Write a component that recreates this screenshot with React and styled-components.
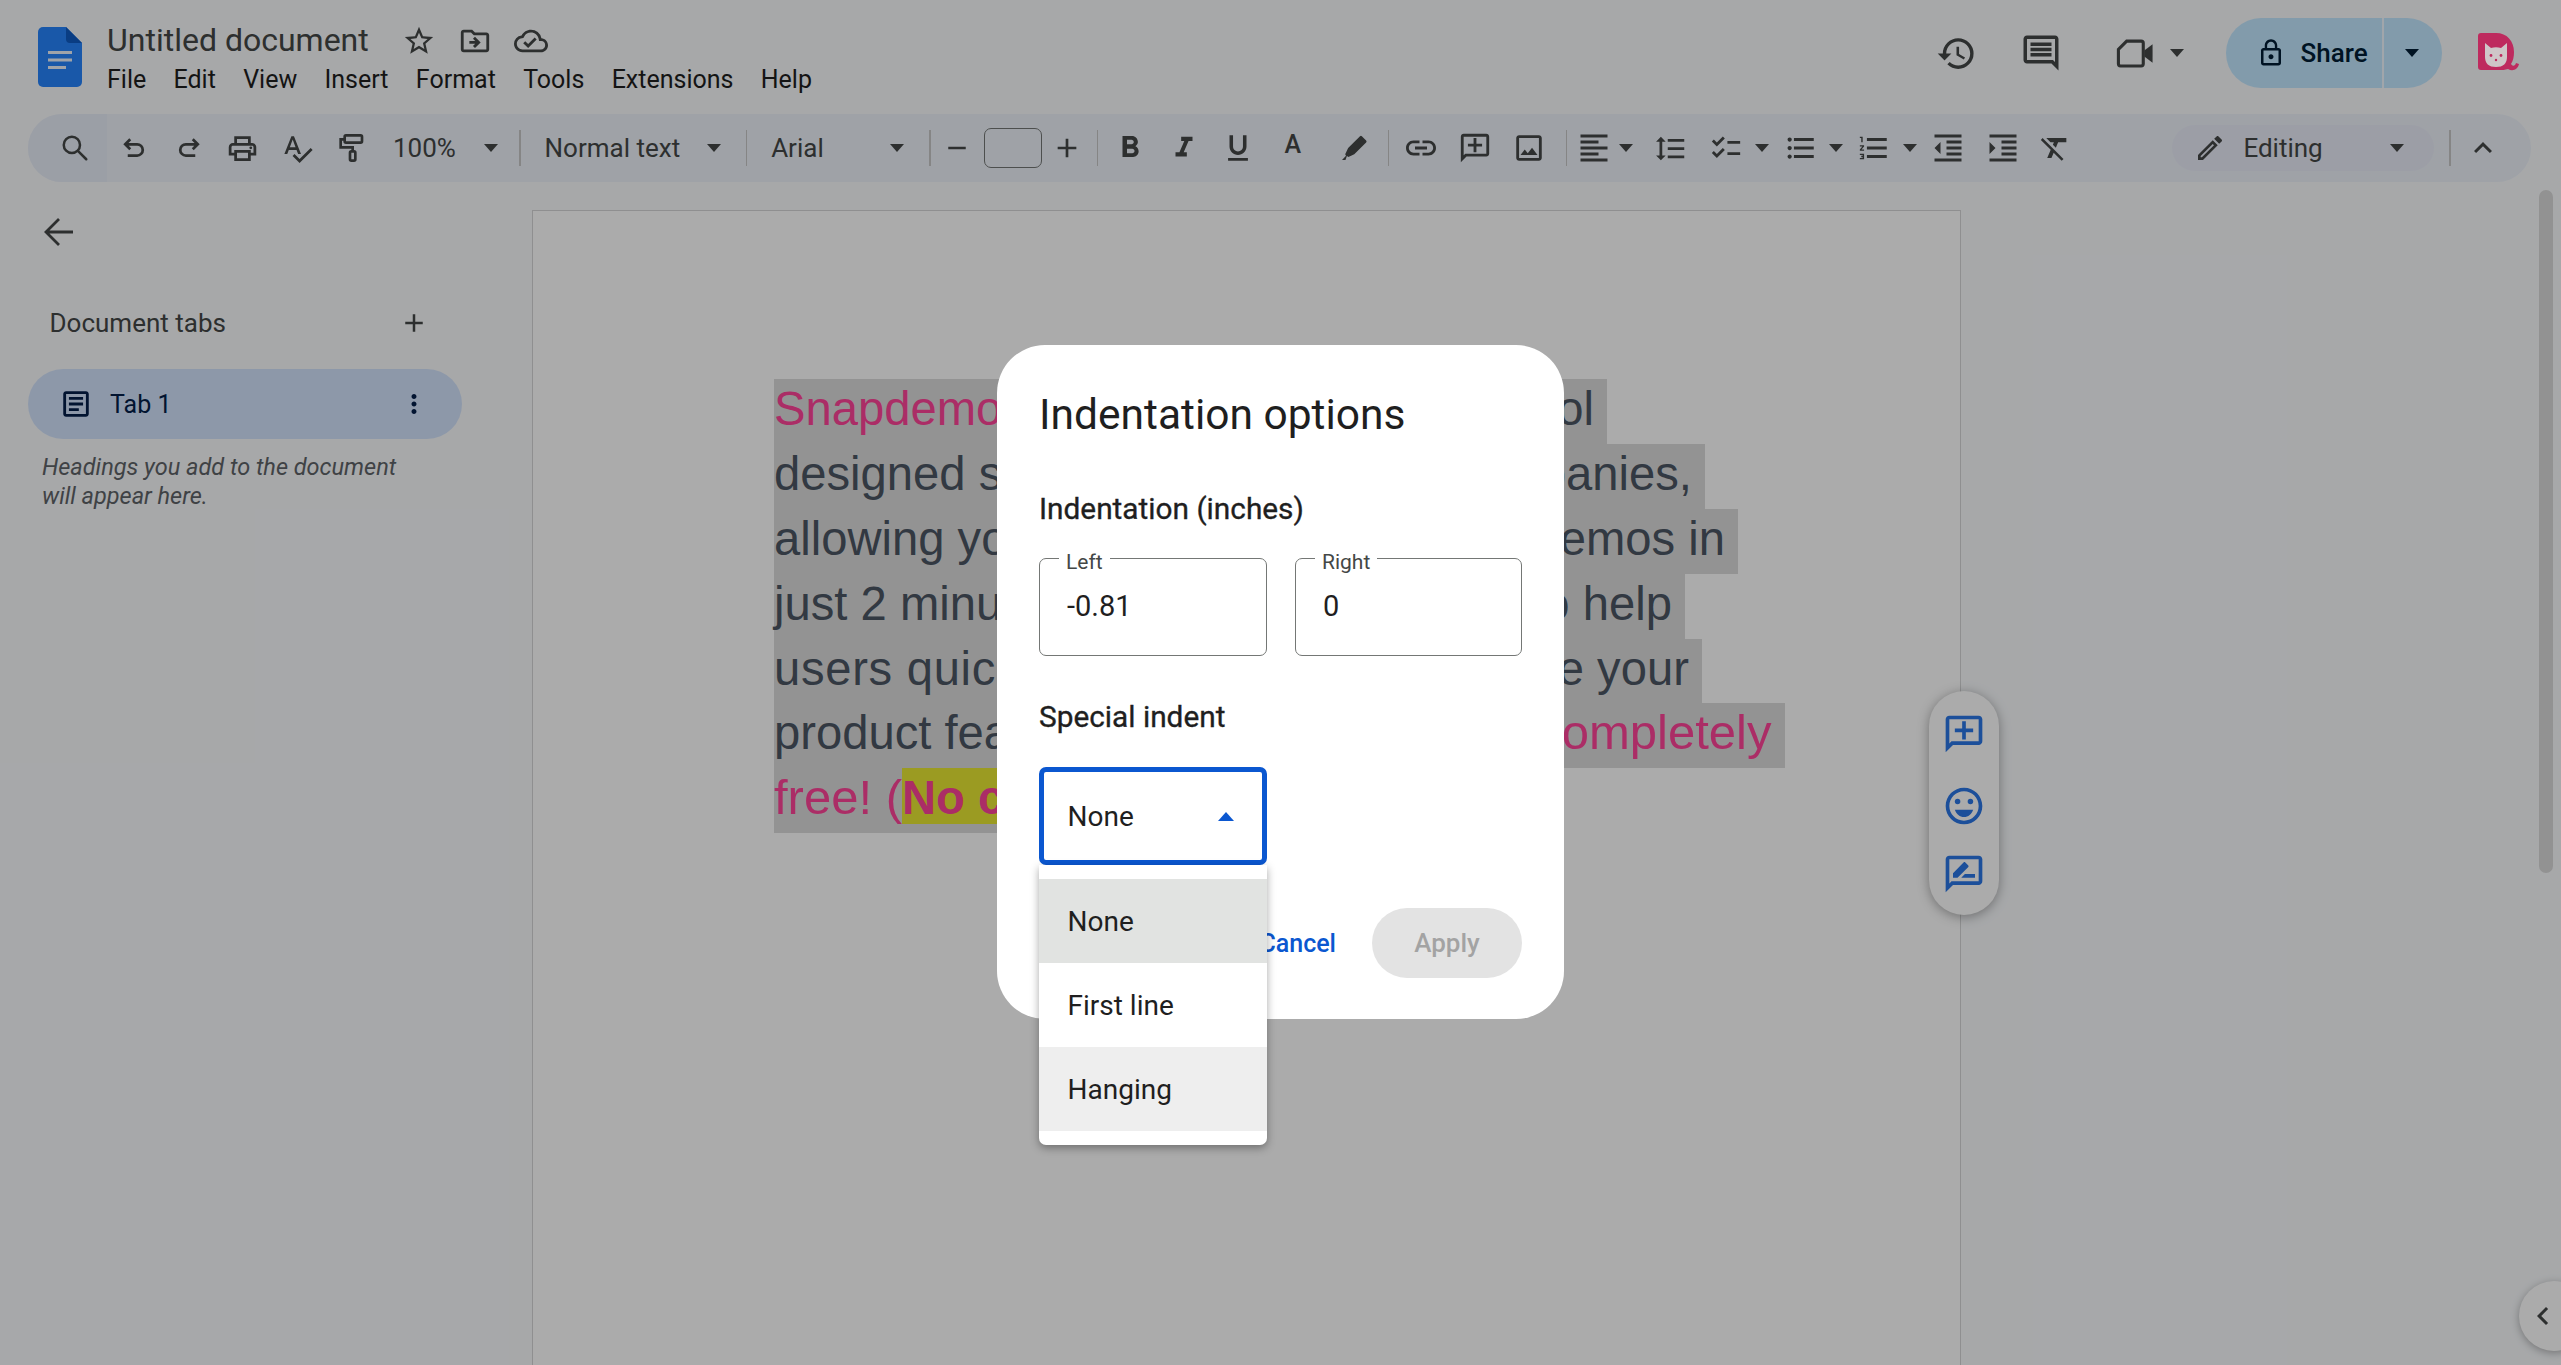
import React from "react";
import styled, { createGlobalStyle } from "styled-components";
import {
  MdOutlinePrint, MdSpellcheck, MdFormatBold, MdFormatItalic, MdFormatUnderlined,
  MdLink, MdOutlineAddComment, MdOutlineImage, MdFormatAlignLeft, MdFormatLineSpacing, MdChecklist,
  MdFormatListBulleted, MdFormatListNumbered, MdFormatIndentDecrease, MdFormatIndentIncrease, MdFormatClear,
  MdOutlineEdit, MdKeyboardArrowUp, MdHistory, MdOutlineComment, MdLockOutline, MdStarBorder,
  MdOutlineDriveFileMove, MdOutlineCloudDone, MdAdd, MdRemove, MdMoreVert, MdOutlineArticle,
  MdOutlineEmojiEmotions, MdOutlineRateReview, MdChevronLeft,
} from "react-icons/md";

const Global = createGlobalStyle`
  html, body { margin: 0; padding: 0; height: 100%; overflow: hidden; background: #f9fbfd; }
  body { font-family: Roboto, "Noto Sans", sans-serif; color: #1f1f1f; }
  * { box-sizing: border-box; }
`;

const Page = styled.div`
  position: relative; width: 2561px; height: 1365px; overflow: hidden; display: flex; flex-direction: column;
`;
const Header = styled.header`
  height: 114px; flex: none; display: flex; align-items: flex-start; padding: 0 42px 0 38px;
`;
const LogoSvg = styled.svg`
  width: 44px; height: 60px; margin-top: 27px; flex: none;
`;
const TitleCol = styled.div`
  margin-left: 25px; display: flex; flex-direction: column;
`;
const TitleRow = styled.div`
  height: 40px; margin-top: 20px; display: flex; align-items: center;
`;
const DocTitle = styled.div`
  font-size: 32px; color: #444746; line-height: 40px; width: 284px;
`;
const TitleIcon = styled.span`
  width: 56px; height: 36px; margin-top: 2px; display: flex; align-items: center; justify-content: center; font-size: 34px; color: #444746;
`;
const MenuRow = styled.nav`
  display: flex; gap: 27.3px; margin-top: 2px; font-size: 25px; line-height: 36px; color: #1f1f1f;
`;
const HeaderRight = styled.div`
  margin-left: auto; margin-top: 18px; height: 70px; display: flex; align-items: center;
`;
const ActionBtn = styled.span`
  width: 70px; height: 70px; display: flex; align-items: center; justify-content: center;
  margin-right: ${p => p.$mr || 0}px; font-size: ${p => p.$size || 40}px; color: #444746;
`;
const Caret = styled.span`
  display: block; flex: none; width: 0; height: 0;
  border-left: ${p => p.$s || 7}px solid transparent; border-right: ${p => p.$s || 7}px solid transparent;
  ${p => (p.$up ? "border-bottom" : "border-top")}: ${p => p.$h || 8}px solid ${p => p.$c || "#444746"};
`;
const ActionCaret = styled.span`
  width: 14px; display: flex; justify-content: center;
`;
const ShareBtn = styled.div`
  margin-left: 41.6px; width: 216px; height: 70px; border-radius: 35px; background: #c2e7ff; color: #001d35;
  display: flex; align-items: center; font-weight: 500; overflow: hidden;
`;
const ShareMain = styled.div`
  width: 158px; height: 100%; display: flex; align-items: center; gap: 15px; padding-left: 30px;
  border-right: 2px solid #f0f8ff; font-size: 26px;
  svg { font-size: 30px; flex: none; }
`;
const ShareCaret = styled.div`
  flex: 1; display: flex; justify-content: center; padding-right: 2px;
`;
const Avatar = styled.svg`
  position: relative; z-index: 1; width: 41px; height: 40px; margin-left: 36.4px; flex: none;
`;

const Toolbar = styled.div`
  height: 68px; flex: none; margin: 0 30px 0 28px; border-radius: 34px; background: #edf2fa;
  display: flex; align-items: center; color: #444746;
`;
const SearchCell = styled.span`
  width: 79px; height: 68px; padding-left: 15px; display: flex; align-items: center; justify-content: center;
  background: #e8edf8; border-radius: 34px 0 0 34px; flex: none;
`;
const Cell = styled.span`
  width: ${p => p.$w || 54.4}px; height: 68px; flex: none; display: flex; align-items: center; justify-content: center;
  font-size: ${p => p.$size || 33}px; color: #444746;
`;
const ToolLetter = styled.span`
  font-size: 25px; font-weight: 500; line-height: 1; margin-top: -8px;
`;
const Sep = styled.span`
  width: 1.6px; height: 36px; background: #c7c7c7; flex: none;
  margin-left: ${p => p.$l || 0}px; margin-right: ${p => p.$r || 0}px;
`;
const DropCell = styled.span`
  width: ${p => p.$w}px; height: 68px; flex: none; display: flex; align-items: center; justify-content: space-between;
  padding-left: ${p => p.$pl}px; padding-right: ${p => p.$pr}px; font-size: 26px;
`;
const SizeBox = styled.span`
  width: 58px; height: 40px; flex: none; border: 1.6px solid #747775; border-radius: 7px;
`;
const Spacer = styled.span`
  flex: 1;
`;
const EditingPill = styled.span`
  width: 262px; height: 46px; flex: none; border-radius: 23px; background: #e9ecf8; display: flex; align-items: center;
  padding: 0 30px 0 22px; font-size: 26px; font-weight: 400;
  svg { font-size: 32px; flex: none; margin-right: 17px; }
  ${Caret} { margin-left: auto; }
`;

const Main = styled.div`
  flex: 1; min-height: 0; display: flex; overflow: hidden;
`;
const Sidebar = styled.aside`
  width: 532px; flex: none; padding-left: 28px; display: flex; flex-direction: column;
`;
const BackBtn = styled.span`
  margin: 32px 0 0 15.5px; height: 36px; display: flex; align-items: center;
`;
const TabsHead = styled.div`
  margin-top: 55px; width: 434px; height: 36px; display: flex; align-items: center; justify-content: space-between;
  padding: 0 33px 0 21.5px; font-size: 26px; font-weight: 400; color: #444746;
  svg { font-size: 30px; color: #444746; }
`;
const TabPill = styled.div`
  margin-top: 28px; width: 434px; height: 70px; border-radius: 35px; background: #d3e3fd; color: #041e49;
  display: flex; align-items: center; padding: 0 33px 0 31px; font-size: 25px; font-weight: 400;
  svg { flex: none; }
`;
const TabName = styled.span`
  margin-left: 17px; flex: 1;
`;
const Hint = styled.p`
  margin: 14px 0 0; padding-left: 14px; width: 420px; font-style: italic; font-size: 23.5px; line-height: 29.3px; color: #5f6368;
`;
const DocPage = styled.div`
  width: 1429px; flex: none; margin-top: 28px; background: #fff; border: 1.6px solid #d5d6d7; border-bottom: 0;
  padding: 168px 0 0 241px; font-family: "Liberation Sans", Arial, sans-serif; font-size: 47.2px; color: #4b5563;
`;
const Line = styled.div`
  width: ${p => p.$w}px; height: 64.9px; background: #dcdcdc; display: flex; justify-content: ${p => (p.$start ? "flex-start" : "space-between")};
  white-space: pre; line-height: 59px;
`;
const Pink = styled.span`
  color: #ff4499; font-size: ${p => (p.$big ? "49px" : "inherit")};
`;
const Spaced = styled.span`
  letter-spacing: 0.7px;
`;
const Marked = styled.span`
  display: inline-block; height: 56px; background: #e8e733; color: #ff4499; font-weight: 700;
`;

const SidePill = styled.div`
  position: absolute; left: 1929px; top: 691px; width: 70px; height: 224px; border-radius: 35px; background: #fff;
  box-shadow: 0 2px 12px rgba(0,0,0,.35); display: flex; flex-direction: column; align-items: center; padding-top: 21px; gap: 28px;
  color: #2a76e6; font-size: 44px;
  svg { display: block; flex: none; }
`;
const FlippedComment = styled(MdOutlineAddComment)`
  transform: scaleX(-1);
`;
const ReviewIcon = styled(MdOutlineRateReview)`
  margin-top: -4px;
`;
const Scrollbar = styled.div`
  position: absolute; right: 8px; top: 190px; width: 14px; height: 683px; border-radius: 7px; background: #dadada;
`;
const Collapse = styled.div`
  position: absolute; left: 2519px; top: 1281px; width: 70px; height: 70px; border-radius: 35px; background: #fff;
  box-shadow: 0 2px 8px rgba(0,0,0,.3); display: flex; align-items: center; padding-left: 6px; font-size: 36px; color: #444746;
`;

const Scrim = styled.div`
  position: absolute; inset: 0; background: rgba(0,0,0,.33);
`;
const Dialog = styled.div`
  position: absolute; left: 997px; top: 345px; width: 567px; height: 674px; border-radius: 48px; background: #fff;
  padding: 42px 42px 41px; display: flex; flex-direction: column;
`;
const DialogTitle = styled.h2`
  margin: 0; font-size: 42.5px; font-weight: 400; line-height: 56px; color: #1f1f1f;
`;
const Section = styled.div`
  margin-top: ${p => p.$mt}px; font-size: 29.8px; font-weight: 400; line-height: 36px; color: #1f1f1f;
  -webkit-text-stroke: 0.35px #1f1f1f;
`;
const Fields = styled.div`
  margin-top: 31px; display: flex; gap: 28px;
`;
const Field = styled.div`
  position: relative; width: ${p => p.$w}px; height: 98px; border: 1.6px solid #747775; border-radius: 7px; display: flex; align-items: center;
  padding: 0 0 2px 27px; font-size: 29px; color: #1f1f1f;
`;
const Legend = styled.span`
  position: absolute; left: 19px; top: -9px; padding: 0 7px; background: #fff; font-size: 21px; line-height: 24px; color: #444746;
`;
const SelectWrap = styled.div`
  position: relative; margin-top: 32px; width: 228px; height: 98px;
`;
const SelectBox = styled.div`
  width: 100%; height: 100%; border: 5px solid #0b57d0; border-radius: 7px; display: flex; align-items: center; justify-content: space-between;
  padding: 0 28px 0 23.5px; font-size: 28px; color: #1f1f1f;
`;
const Menu = styled.div`
  position: absolute; left: 0; top: 100%; width: 228px; padding: 14px 0; background: #fff; border-radius: 0 0 7px 7px;
  box-shadow: 0 3px 8px rgba(0,0,0,.35); z-index: 2;
`;
const MenuItem = styled.div`
  height: 84px; padding-left: 28.5px; display: flex; align-items: center; font-size: 28px; color: #1f1f1f; background: ${p => p.$bg || "#fff"};
`;
const Actions = styled.div`
  margin-top: 43px; height: 70px; display: flex; justify-content: flex-end; align-items: center; gap: 36px;
`;
const CancelBtn = styled.span`
  font-size: 25px; font-weight: 500; color: #0b57d0;
`;
const ApplyBtn = styled.span`
  width: 150px; height: 70px; border-radius: 35px; background: #e3e3e3; color: #a3a3a3; display: flex; align-items: center; justify-content: center;
  font-size: 26px; font-weight: 500;
`;

const SearchIcon = () => (
  <svg width="30" height="30" viewBox="0 0 24 24" fill="none" stroke="#444746" strokeWidth="2">
    <circle cx="9.5" cy="9.5" r="6.5" /><path d="M14.5 14.5 21 21" strokeLinecap="round" />
  </svg>
);
const BackIcon = () => (
  <svg width="30" height="30" viewBox="0 0 30 30" fill="none" stroke="#444746" strokeWidth="2.8">
    <path d="M15 2 2 15 15 28M2 15H29" />
  </svg>
);
const UndoIcon = ({ flip }) => (
  <svg width="30" height="30" viewBox="0 0 24 24" fill="none" stroke="#444746" strokeWidth="2.2" style={flip ? { transform: "scaleX(-1)" } : undefined}>
    <path d="M9 5 5 9l4 4M5 9h9.5a4.5 4.5 0 0 1 0 9H7" />
  </svg>
);
const RollerIcon = () => (
  <svg width="32" height="32" viewBox="0 0 24 24" fill="none" stroke="#444746" strokeWidth="2">
    <rect x="6.5" y="2.5" width="13" height="5.5" rx="1" />
    <path d="M6.5 5.5H3.5V11.5H12.5V14.5" />
    <rect x="10.5" y="14.5" width="4" height="7" rx="1" />
  </svg>
);
const MarkerIcon = () => (
  <svg width="32" height="32" viewBox="0 0 24 24" fill="#444746">
    <path d="M3 21l3-3.2-.6-1.2L7.6 12 16.5 3.2a1 1 0 0 1 1.4 0l3.2 3.2a1 1 0 0 1 0 1.4L12.2 16.7l-4.4 2L6.7 18 5.6 21z" />
  </svg>
);
const MeetIcon = () => (
  <svg width="39" height="29" viewBox="0 0 37 28" fill="none">
    <path d="M10 2H24a2 2 0 0 1 2 2V24a2 2 0 0 1-2 2H4a2 2 0 0 1-2-2V10Z" stroke="#444746" strokeWidth="3" />
    <path d="M27 11 35 5V23L27 17Z" fill="#444746" />
  </svg>
);

export default function App() {
  return (
    <Page>
      <Global />
      <Header>
        <LogoSvg viewBox="0 0 44 60">
          <path d="M5 0H28L44 16V55a5 5 0 0 1-5 5H5a5 5 0 0 1-5-5V5a5 5 0 0 1 5-5Z" fill="#2684fc" />
          <path d="M28 0 44 16H32a4 4 0 0 1-4-4Z" fill="#0f5bc4" />
          <path d="M10 25.5H34M10 33H34M10 40.5H28" stroke="#eef3fc" strokeWidth="3" />
        </LogoSvg>
        <TitleCol>
          <TitleRow>
            <DocTitle>Untitled document</DocTitle>
            <TitleIcon><MdStarBorder /></TitleIcon>
            <TitleIcon><MdOutlineDriveFileMove /></TitleIcon>
            <TitleIcon><MdOutlineCloudDone /></TitleIcon>
          </TitleRow>
          <MenuRow>
            <span>File</span><span>Edit</span><span>View</span><span>Insert</span>
            <span>Format</span><span>Tools</span><span>Extensions</span><span>Help</span>
          </MenuRow>
        </TitleCol>
        <HeaderRight>
          <ActionBtn $mr={15} $size={41}><MdHistory /></ActionBtn>
          <ActionBtn $mr={24} $size={42}><MdOutlineComment /></ActionBtn>
          <ActionBtn><MeetIcon /></ActionBtn>
          <ActionCaret><Caret /></ActionCaret>
          <ShareBtn>
            <ShareMain><MdLockOutline />Share</ShareMain>
            <ShareCaret><Caret $c="#001d35" /></ShareCaret>
          </ShareBtn>
          <Avatar viewBox="0 0 41 40">
            <path d="M0 3a3 3 0 0 1 3-3H18C29 0 36 8 36 19C36 24 35 28 33 31C35 34 37 33 38 30L41 31C40 36 35 39 30 36C27 37 24 37 20 37H3a3 3 0 0 1-3-3Z" fill="#be2a5e" />
            <path d="M7 10 13 15Q18 13.5 23 15L29 10V24Q29 34 18 34Q7 34 7 24Z" fill="#cfc6c8" />
            <circle cx="13" cy="22.5" r="1.4" fill="#be2a5e" /><circle cx="23" cy="22.5" r="1.4" fill="#be2a5e" />
            <circle cx="18" cy="27" r="1.2" fill="#be2a5e" />
          </Avatar>
        </HeaderRight>
      </Header>

      <Toolbar>
        <SearchCell><SearchIcon /></SearchCell>
        <Cell><UndoIcon /></Cell>
        <Cell><UndoIcon flip /></Cell>
        <Cell><MdOutlinePrint /></Cell>
        <Cell><MdSpellcheck /></Cell>
        <Cell><RollerIcon /></Cell>
        <DropCell $w={140} $pl={14} $pr={21}>100%<Caret /></DropCell>
        <Sep />
        <DropCell $w={225} $pl={24} $pr={25}>Normal text<Caret /></DropCell>
        <Sep />
        <DropCell $w={182} $pl={24} $pr={25}>Arial<Caret /></DropCell>
        <Sep />
        <Cell $w={53} $size={30}><MdRemove /></Cell>
        <SizeBox />
        <Cell $w={50} $size={32}><MdAdd /></Cell>
        <Sep $l={5} $r={4} />
        <Cell $size={36}><MdFormatBold /></Cell>
        <Cell $size={34}><MdFormatItalic /></Cell>
        <Cell $size={34}><MdFormatUnderlined /></Cell>
        <Cell><ToolLetter>A</ToolLetter></Cell>
        <Cell $w={68}><MarkerIcon /></Cell>
        <Sep $r={4} />
        <Cell $size={36}><MdLink /></Cell>
        <Cell $size={34}><FlippedComment /></Cell>
        <Cell $size={34}><MdOutlineImage /></Cell>
        <Sep $l={9} $r={3} />
        <Cell $w={48} $size={36}><MdFormatAlignLeft /></Cell>
        <Cell $w={16}><Caret /></Cell>
        <Cell $w={72}><MdFormatLineSpacing /></Cell>
        <Cell $w={40} $size={34}><MdChecklist /></Cell>
        <Cell $w={32}><Caret /></Cell>
        <Cell $w={46} $size={34}><MdFormatListBulleted /></Cell>
        <Cell $w={24}><Caret /></Cell>
        <Cell $w={52} $size={34}><MdFormatListNumbered /></Cell>
        <Cell $w={20}><Caret /></Cell>
        <Cell $w={56} $size={36}><MdFormatIndentDecrease /></Cell>
        <Cell $w={54} $size={36}><MdFormatIndentIncrease /></Cell>
        <Cell $w={50} $size={34}><MdFormatClear /></Cell>
        <Spacer />
        <EditingPill><MdOutlineEdit />Editing<Caret /></EditingPill>
        <Sep $l={15} />
        <Cell $w={64} $size={36}><MdKeyboardArrowUp /></Cell>
        <Cell $w={16} />
      </Toolbar>

      <Main>
        <Sidebar>
          <BackBtn><BackIcon /></BackBtn>
          <TabsHead>Document tabs<MdAdd /></TabsHead>
          <TabPill>
            <MdOutlineArticle size={34} />
            <TabName>Tab 1</TabName>
            <MdMoreVert size={30} />
          </TabPill>
          <Hint>Headings you add to the document<br />will appear here.</Hint>
        </Sidebar>
        <DocPage>
          <Line $w={833}><Pink>Snapdemo is a free</Pink><span>tool </span></Line>
          <Line $w={931}><span>designed specifically</span><span>companies, </span></Line>
          <Line $w={964}><span>allowing you to build</span><span>demos in </span></Line>
          <Line $w={911}><span>just 2 minutes,</span><span>to help </span></Line>
          <Line $w={928}><Spaced>users quickly explore</Spaced><span>e your </span></Line>
          <Line $w={1011}><span>product features</span><Pink $big>completely </Pink></Line>
          <Line $w={560} $start><Pink $big>free! (</Pink><Marked>No credit card</Marked></Line>
        </DocPage>
      </Main>

      <SidePill>
        <FlippedComment />
        <MdOutlineEmojiEmotions />
        <ReviewIcon />
      </SidePill>
      <Scrollbar />
      <Collapse><MdChevronLeft /></Collapse>

      <Scrim />
      <Dialog>
        <DialogTitle>Indentation options</DialogTitle>
        <Section $mt={48}>Indentation (inches)</Section>
        <Fields>
          <Field $w={228}><Legend>Left</Legend>-0.81</Field>
          <Field $w={227}><Legend>Right</Legend>0</Field>
        </Fields>
        <Section $mt={43}>Special indent</Section>
        <SelectWrap>
          <SelectBox>None<Caret $up $s={8.5} $h={9} $c="#0b57d0" /></SelectBox>
          <Menu>
            <MenuItem $bg="#e1e3e1">None</MenuItem>
            <MenuItem>First line</MenuItem>
            <MenuItem $bg="#eeeeee">Hanging</MenuItem>
          </Menu>
        </SelectWrap>
        <Actions>
          <CancelBtn>Cancel</CancelBtn>
          <ApplyBtn>Apply</ApplyBtn>
        </Actions>
      </Dialog>
    </Page>
  );
}
